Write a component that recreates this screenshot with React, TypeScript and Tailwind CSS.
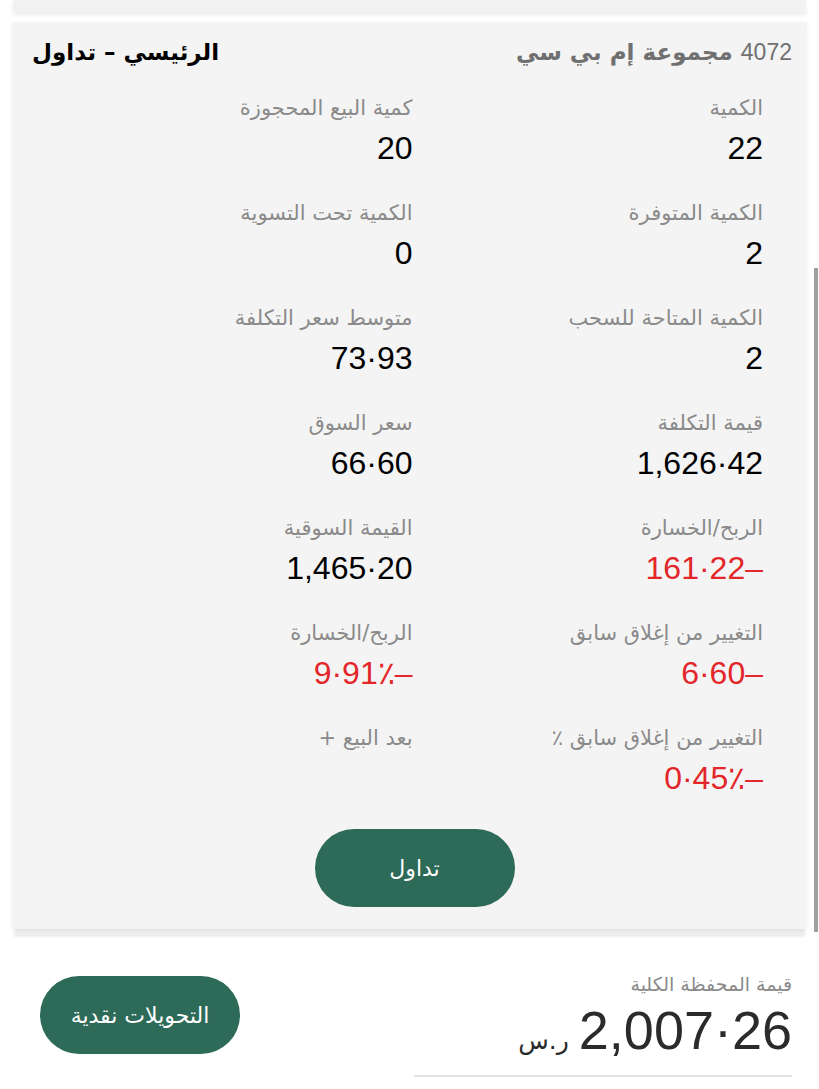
import React from "react";

const AR = { fontFamily: '"DejaVu Sans", "Noto Sans", sans-serif' };
const NUM = { fontFamily: '"Liberation Sans", Arial, sans-serif' };

type Cell = { label: string; value?: string; red?: boolean };

const rows: [Cell, Cell][] = [
  [{ label: "الكمية", value: "22" }, { label: "كمية البيع المحجوزة", value: "20" }],
  [{ label: "الكمية المتوفرة", value: "2" }, { label: "الكمية تحت التسوية", value: "0" }],
  [{ label: "الكمية المتاحة للسحب", value: "2" }, { label: "متوسط سعر التكلفة", value: "73·93" }],
  [{ label: "قيمة التكلفة", value: "1,626·42" }, { label: "سعر السوق", value: "66·60" }],
  [{ label: "الربح/الخسارة", value: "161·22–", red: true }, { label: "القيمة السوقية", value: "1,465·20" }],
  [{ label: "التغيير من إغلاق سابق", value: "6·60–", red: true }, { label: "الربح/الخسارة", value: "9·91٪–", red: true }],
  [{ label: "التغيير من إغلاق سابق ٪", value: "0·45٪–", red: true }, { label: "بعد البيع +" }],
];

function CellView({ c }: { c: Cell }) {
  return (
    <div className="flex flex-col items-start h-[72px]">
      <div className="text-[21px] leading-[28px] text-[#8a8a8a]" style={AR}>
        {c.label}
      </div>
      {c.value && (
        <div
          className={`mt-[8px] text-[32px] leading-[36px] ${c.red ? "text-[#e3262a]" : "text-black"}`}
          style={NUM}
        >
          <span dir="ltr">{c.value}</span>
        </div>
      )}
    </div>
  );
}

export default function App() {
  return (
    <div dir="rtl" className="relative w-[819px] h-[1089px] bg-white overflow-hidden">
      {/* top card remnant */}
      <div className="mx-[13px] h-[12px] bg-[#f2f2f2] shadow-[0_3px_4px_rgba(0,0,0,0.08)]" />

      {/* main card */}
      <div className="mt-[10px] ml-[12px] mr-[12px] bg-[#f4f4f4] pt-[15px] pb-[22px] shadow-[0_1px_4px_rgba(0,0,0,0.06),0_10px_2px_-2px_rgba(0,0,0,0.07)]">
        <div className="flex items-center justify-between h-[30px] pr-[15px] pl-[20px]">
          <div className="text-[23px] text-[#707070] flex items-center gap-[8px]">
            <span style={NUM}>4072</span>
            <span className="font-bold" style={AR}>مجموعة إم بي سي</span>
          </div>
          <div className="text-[23px] font-bold text-black" style={AR}>
            الرئيسي – تداول
          </div>
        </div>

        <div className="mt-[27px] pr-[44px] pl-[50px] grid grid-cols-2 gap-y-[33px]">
          {rows.map((r, i) => (
            <React.Fragment key={i}>
              <CellView c={r[0]} />
              <CellView c={r[1]} />
            </React.Fragment>
          ))}
        </div>

        <div className="mt-[33px] flex justify-center pl-[10px]">
          <button
            className="w-[200px] h-[78px] rounded-full bg-[#2d6a58] text-white text-[22px]"
            style={AR}
          >
            تداول
          </button>
        </div>
      </div>

      {/* bottom section */}
      <div className="mt-[41px] flex items-start justify-between pr-[27px] pl-[40px]">
        <div className="flex flex-col items-start w-[378px]">
          <div className="text-[19px] leading-[28px] text-[#8a8a8a]" style={AR}>
            قيمة المحفظة الكلية
          </div>
          <div className="mt-[4px] flex items-baseline gap-[10px] text-[#2b2b2b]">
            <span dir="ltr" className="text-[54px] leading-[56px] font-light" style={NUM}>
              2,007·26
            </span>
            <span className="text-[25px]" style={AR}>ر.س</span>
          </div>
          <div className="mt-[15px] w-full h-[2px] bg-[#e2e2e2]" />
        </div>
        <button
          className="mt-[6px] w-[200px] h-[78px] rounded-full bg-[#2d6a58] text-white text-[22px]"
          style={AR}
        >
          التحويلات نقدية
        </button>
      </div>

      {/* scrollbar */}
      <div className="absolute right-[1px] top-[268px] w-[4px] h-[664px] bg-[#a0a0a0]" />
    </div>
  );
}
